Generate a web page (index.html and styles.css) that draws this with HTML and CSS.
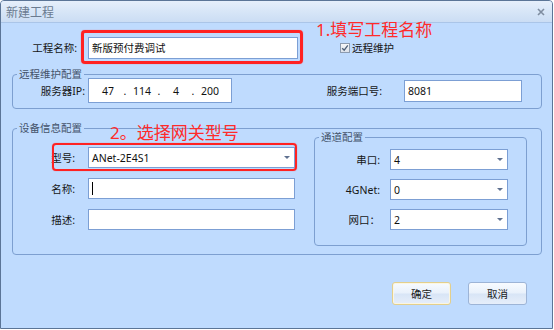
FILE: index.html
```html
<!DOCTYPE html>
<html lang="zh-CN">
<head>
<meta charset="utf-8">
<title>新建工程</title>
<link rel="stylesheet" href="styles.css">
</head>
<body>
<div class="window">
  <div class="titlebar">
    <span class="title">新建工程</span>
    <svg class="close" width="8" height="8" viewBox="0 0 8 8"><path d="M1 1L7 7M7 1L1 7" stroke="#7f8da0" stroke-width="1.6" fill="none"/></svg>
  </div>

  <div class="row-name">
    <span class="lbl lbl-name">工程名称:</span>
    <div class="input input-name">新版预付费调试</div>
    <div class="check">
      <span class="box"><svg width="8" height="8" viewBox="0 0 8 8"><path d="M1.2 4.2L3.2 6.2L6.8 1.4" stroke="#4f6079" stroke-width="1.3" fill="none"/></svg></span>
      <span class="lbl">远程维护</span>
    </div>
  </div>

  <div class="group g-remote">
    <span class="legend">远程维护配置</span>
    <div class="remote-row">
      <span class="lbl lbl-ip">服务器IP:</span>
      <div class="ipbox">
        <span class="oct">47</span><span class="dot">.</span>
        <span class="oct">114</span><span class="dot">.</span>
        <span class="oct">4</span><span class="dot">.</span>
        <span class="oct">200</span>
      </div>
      <span class="lbl lbl-port">服务端口号:</span>
      <div class="input input-port">8081</div>
    </div>
  </div>

  <div class="group g-device">
    <span class="legend">设备信息配置</span>
    <div class="device-body">
      <div class="dev-fields">
        <div class="field">
          <span class="lbl lbl-dev">型号:</span>
          <div class="combo combo-dev"><span>ANet-2E4S1</span><span class="arrow"></span></div>
        </div>
        <div class="field">
          <span class="lbl lbl-dev">名称:</span>
          <div class="input input-dev"><span class="caret"></span></div>
        </div>
        <div class="field">
          <span class="lbl lbl-dev">描述:</span>
          <div class="input input-dev"></div>
        </div>
      </div>
      <div class="group g-channel">
        <span class="legend">通道配置</span>
        <div class="ch-fields">
          <div class="field">
            <span class="lbl lbl-ch">串口:</span>
            <div class="combo combo-ch"><span>4</span><span class="arrow"></span></div>
          </div>
          <div class="field">
            <span class="lbl lbl-ch">4GNet:</span>
            <div class="combo combo-ch"><span>0</span><span class="arrow"></span></div>
          </div>
          <div class="field">
            <span class="lbl lbl-ch">网口：</span>
            <div class="combo combo-ch"><span>2</span><span class="arrow"></span></div>
          </div>
        </div>
      </div>
    </div>
  </div>

  <div class="buttons">
    <button class="btn btn-ok">确定</button>
    <button class="btn">取消</button>
  </div>

  <div class="note note1">1.填写工程名称</div>
  <div class="note note2">2。选择网关型号</div>
  <div class="hl hl1"></div>
  <div class="hl hl2"></div>
</div>
</body>
</html>
```

FILE: styles.css
```css
body {
  margin: 0;
  background: #ffffff;
  font-family: "Noto Sans", "Noto Sans CJK SC", sans-serif;
}

.window {
  position: relative;
  width: 553px;
  height: 329px;
  box-sizing: border-box;
  border: 1px solid #5b7597;
  border-radius: 4px 4px 0 0;
  background: #bfdbfe;
  overflow: hidden;
}

.titlebar {
  height: 22px;
  box-sizing: border-box;
  padding: 1px 7px 0 5px;
  border-bottom: 1px solid #aac5e8;
  background: linear-gradient(#e6effb, #d6e5f7 55%, #cbddf4);
  display: flex;
  align-items: center;
  justify-content: space-between;
}

.title {
  font-size: 12px;
  line-height: 14px;
  color: #6b7b90;
  font-family: "Noto Sans CJK SC", sans-serif;
}

.lbl {
  font-size: 10.5px;
  line-height: 14px;
  color: #161616;
  white-space: nowrap;
}

.input,
.combo,
.ipbox {
  box-sizing: border-box;
  background: #ffffff;
  border: 1px solid #7c9fd4;
  font-size: 10.5px;
  line-height: 14px;
  color: #111111;
  display: flex;
  align-items: center;
}

.input,
.combo {
  padding-left: 3px;
}

/* first row */
.row-name {
  display: flex;
  align-items: center;
  height: 22px;
  margin-top: 14px;
}
.lbl-name {
  width: 76px;
  text-align: right;
  margin-right: 11px;
}
.input-name {
  width: 210px;
  height: 22px;
}

.check {
  margin-left: 42px;
  display: flex;
  align-items: center;
  gap: 2px;
}
.box {
  width: 10px;
  height: 10px;
  box-sizing: border-box;
  border: 1px solid #8c9bb0;
  background: linear-gradient(#f6f7f9, #dde2ea);
  display: flex;
  align-items: center;
  justify-content: center;
}

/* groups */
.group {
  position: relative;
  box-sizing: border-box;
  border: 1px solid #7d9fd0;
  border-radius: 4px;
  margin-left: 11px;
  width: 530px;
}
.legend {
  position: absolute;
  top: -8px;
  left: 4px;
  padding: 0 2px;
  background: #bfdbfe;
  font-size: 10.5px;
  line-height: 14px;
  color: #44536a;
  white-space: nowrap;
}

.g-remote {
  height: 35px;
  margin-top: 15px;
}
.remote-row {
  display: flex;
  align-items: center;
  height: 25px;
  margin-top: 3px;
}
.lbl-ip {
  width: 72px;
  text-align: right;
  margin-right: 3px;
}
.ipbox {
  width: 144px;
  height: 25px;
  padding-left: 4px;
}
.oct {
  width: 30px;
  text-align: center;
}
.dot {
  width: 4px;
  text-align: center;
}
.lbl-port {
  width: 150px;
  text-align: right;
  margin-right: 22px;
}
.input-port {
  width: 118px;
  height: 22px;
}

.g-device {
  margin-top: 19px;
}
.device-body {
  display: flex;
  align-items: flex-start;
  padding-bottom: 8px;
}
.dev-fields {
  padding-top: 18px;
  display: flex;
  flex-direction: column;
  gap: 10px;
}
.field {
  display: flex;
  align-items: center;
  height: 21px;
}
.lbl-dev {
  width: 62px;
  text-align: right;
  margin-right: 13px;
}
.input-dev,
.combo-dev {
  width: 207px;
  height: 21px;
}
.combo {
  justify-content: space-between;
  padding-right: 4px;
}
.arrow {
  width: 0;
  height: 0;
  border-left: 3px solid transparent;
  border-right: 3px solid transparent;
  border-top: 3px solid #5f7190;
}
.caret {
  width: 1px;
  height: 13px;
  background: #000000;
}

.g-channel {
  width: 213px;
  height: 109px;
  margin-left: 19px;
  margin-top: 8px;
  padding-top: 11px;
}
.ch-fields {
  display: flex;
  flex-direction: column;
  gap: 9px;
}
.lbl-ch {
  width: 65px;
  text-align: right;
  margin-right: 10px;
}
.combo-ch {
  width: 118px;
  height: 21px;
}

/* buttons */
.buttons {
  display: flex;
  justify-content: flex-end;
  gap: 17px;
  margin-top: 27px;
  padding-right: 25px;
}
.btn {
  width: 59px;
  height: 23px;
  box-sizing: border-box;
  border: 1px solid #9db4d6;
  border-radius: 3px;
  background: linear-gradient(#f8fbff, #e9f1fb 48%, #d8e5f6 52%, #e6eefa);
  font-family: "Noto Sans", "Noto Sans CJK SC", sans-serif;
  font-size: 10.5px;
  line-height: 14px;
  color: #1a1a1a;
  padding: 0;
}
.btn-ok {
  border-color: #e3cf8c;
  box-shadow: inset 0 0 0 1px #fbf6e2;
}

/* annotations */
.note {
  position: absolute;
  font-family: "Noto Sans", "Noto Sans CJK SC", sans-serif;
  font-size: 17px;
  line-height: 20px;
  color: #ff2b2b;
  white-space: nowrap;
}
.note1 {
  left: 315px;
  top: 19px;
}
.note2 {
  left: 109px;
  top: 122px;
}
.hl {
  position: absolute;
  box-sizing: border-box;
  border: 3px solid #ff2222;
  border-radius: 4px;
  box-shadow: 0 0 1px rgba(255, 0, 0, 0.6);
}
.hl1 {
  left: 80px;
  top: 29px;
  width: 222px;
  height: 34px;
}
.hl2 {
  left: 51px;
  top: 142px;
  width: 245px;
  height: 28px;
  border-width: 2.5px;
}
```
